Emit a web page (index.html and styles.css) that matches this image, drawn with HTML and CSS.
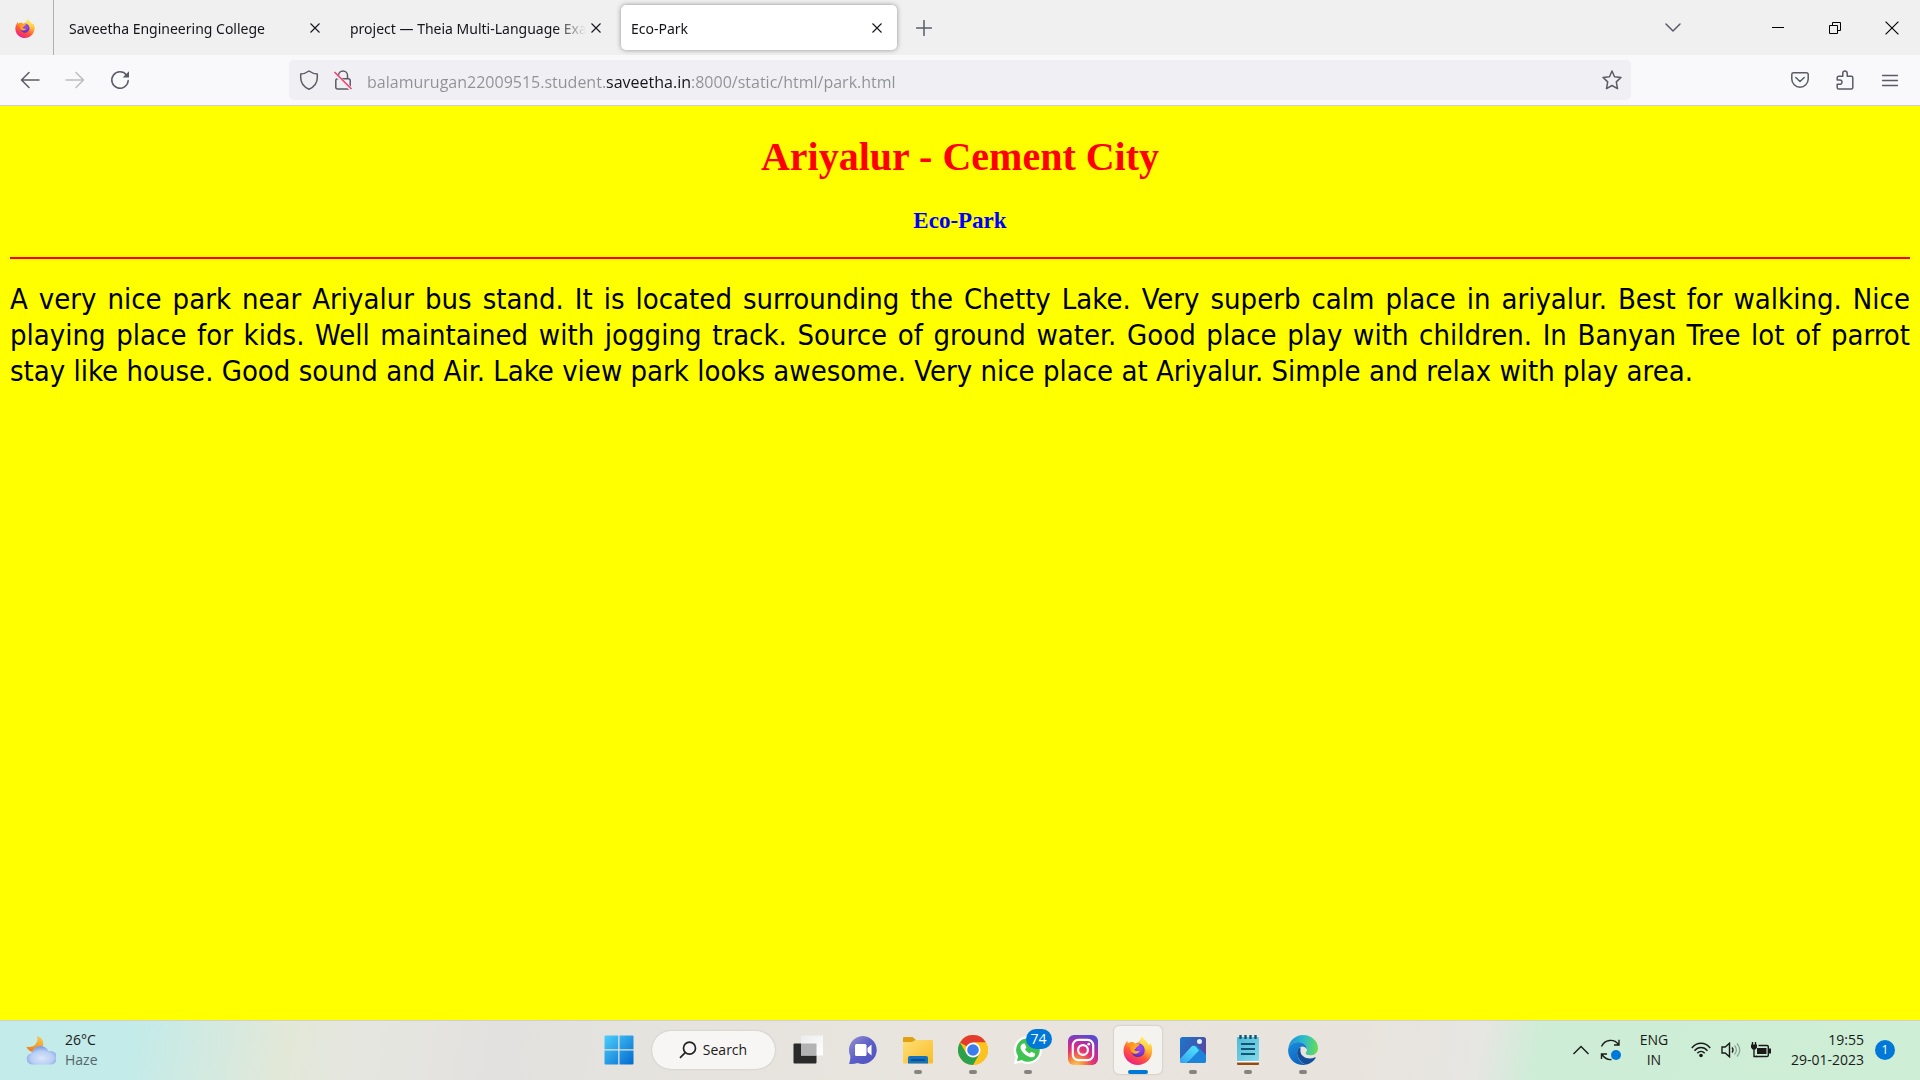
FILE: index.html
```html
<!DOCTYPE html>
<html lang="en">
<head>
<meta charset="utf-8">
<title>Eco-Park</title>
<link rel="stylesheet" href="styles.css">
</head>
<body>
<svg class="defs" aria-hidden="true">
  <defs>
    <linearGradient id="ff-body" x1="0.8" y1="0.05" x2="0.3" y2="1">
      <stop offset="0" stop-color="#fff44f"/><stop offset="0.35" stop-color="#ffb02e"/><stop offset="0.62" stop-color="#ff5a36"/><stop offset="1" stop-color="#f0188a"/>
    </linearGradient>
    <linearGradient id="ff-tail" x1="0.5" y1="0" x2="0.5" y2="1">
      <stop offset="0" stop-color="#fff36e"/><stop offset="0.5" stop-color="#ffc93a"/><stop offset="1" stop-color="#ff6a3a" stop-opacity="0"/>
    </linearGradient>
    <radialGradient id="ff-globe" cx="0.6" cy="0.35" r="0.7">
      <stop offset="0" stop-color="#a04df5"/><stop offset="0.6" stop-color="#7a35d8"/><stop offset="1" stop-color="#4b2fb0"/>
    </radialGradient>
    <linearGradient id="ff-head" x1="0" y1="0" x2="1" y2="0.6">
      <stop offset="0" stop-color="#ff8a16"/><stop offset="1" stop-color="#ffb52c"/>
    </linearGradient>
  </defs>
  <symbol id="firefox" viewBox="0 0 30 30">
    <path fill="url(#ff-body)" d="M19 1c1 3 3.600 4.300 5 6.500.8 1 1.200 2 1.500 3 1-.3 1.500-1.200 1.500-2.500 2 3.300 2.600 7 1.800 10.800C27.400 25.300 21.700 30 15 30 7 30 .5 23.700.5 16c0-3.800 1.500-7.500 4-10.500-.1 1.300.1 2.200.6 3C6.500 7.500 8 7 9.700 7c.8.9 1.800 1.500 3 1.700C14 7.500 17.500 7 19 1z"/>
    <path fill="url(#ff-tail)" d="M19 1c1 3 3.600 4.300 5 6.500.8 1 1.200 2 1.500 3 1-.3 1.500-1.200 1.500-2.500 2 3.300 2.600 7 1.800 10.800-1 4.700-4.300 7.200-7.300 7.200 2.500-4 3-8.500.5-12.500-1.500-2-4.500-3-6.500-4.500C17.500 8 19 5 19 1z"/>
    <path fill="url(#ff-globe)" d="M9 12c2-3.500 7.500-4.500 10.500-2 2.500 2.200 2.800 6.500 1 9.300-2 3-6.800 3.700-9.700 1.400C8.300 18.700 7.700 14.500 9 12z"/>
    <path fill="url(#ff-head)" d="M5 8.500C6.500 7.500 8 7 9.700 7c.8.9 1.800 1.500 3 1.700l4 .6c-.7 1.500-1.600 2.300-3 2.800-.3 1.300-1.500 2-2.500 2.700 1 1.500 3 1.800 5.500 1-1 2.600-3.500 3.500-6 2.600C8 17.500 6.800 14 7.500 11.500L5 8.500z"/>
  </symbol>
  <symbol id="cross" viewBox="0 0 12 12"><path d="M1.500 1.500l9 9M10.500 1.500l-9 9" fill="none" stroke="currentColor" stroke-width="1.100"/></symbol>
</svg>

<header class="browser">
  <div class="tabstrip">
    <button class="pinned" aria-label="Firefox View"><svg width="20" height="20"><use href="#firefox"/></svg></button>
    <div class="tabs">
      <div class="tab"><button class="tab-title">Saveetha Engineering College</button><button class="tab-close" aria-label="Close tab"><svg width="12" height="12"><use href="#cross"/></svg></button></div>
      <div class="tab"><button class="tab-title">project — Theia Multi-Language Example</button><button class="tab-close" aria-label="Close tab"><svg width="12" height="12"><use href="#cross"/></svg></button></div>
      <div class="tab tab-active"><button class="tab-title">Eco-Park</button><button class="tab-close" aria-label="Close tab"><svg width="12" height="12"><use href="#cross"/></svg></button></div>
    </div>
    <button class="tool new-tab" aria-label="New tab"><svg width="16" height="16" viewBox="0 0 16 16"><path d="M8 .5v15M.5 8h15" class="line"/></svg></button>
    <button class="tool list-tabs" aria-label="List all tabs"><svg width="16" height="10" viewBox="0 0 16 10"><path d="M1 1l7 7 7-7" class="line"/></svg></button>
    <div class="window-buttons">
      <button aria-label="Minimize"><svg width="12" height="12" viewBox="0 0 12 12"><path d="M0 5.500h12" class="win"/></svg></button>
      <button aria-label="Restore"><svg width="12" height="12" viewBox="0 0 12 12"><path d="M.5 3.500h8v8h-8zM3.500 3.500v-3h8v8h-3" class="win"/></svg></button>
      <button aria-label="Close"><svg width="14" height="14" viewBox="0 0 12 12"><path d="M.5.5l11 11M11.500.5l-11 11" class="win"/></svg></button>
    </div>
  </div>
  <div class="toolbar">
    <div class="tool-group">
      <button class="tool" aria-label="Back"><svg width="20" height="18" viewBox="0 0 20 18"><path d="M19 9H2M9 1.500L1.500 9 9 16.500" class="line"/></svg></button>
      <button class="tool" aria-label="Forward" disabled><svg width="20" height="18" viewBox="0 0 20 18"><path d="M1 9h17M11 1.500L18.500 9 11 16.500" class="line"/></svg></button>
      <button class="tool" aria-label="Reload"><svg width="20" height="20" viewBox="0 0 20 20"><path d="M16.500 5A8.200 8.200 0 1 0 18.200 10.500" class="line"/><path d="M19 1.200v6.300h-6.300z" fill="currentColor"/></svg></button>
    </div>
    <form class="urlbar">
      <svg width="20" height="20" viewBox="0 0 20 20"><path d="M10 1c2.500 1.800 5.200 2.800 8.300 3v3.500c0 5-2.800 9.300-8.300 11.700C4.500 16.800 1.700 12.500 1.700 7.500V4C4.800 3.800 7.500 2.800 10 1z" class="line"/></svg>
      <svg width="20" height="20" viewBox="0 0 20 20"><path d="M5.500 8.500V5.500a4.500 4.500 0 0 1 9 0v3M4.500 8.800h11a1.700 1.700 0 0 1 1.700 1.700v6.800a1.700 1.700 0 0 1-1.700 1.700h-11a1.700 1.700 0 0 1-1.700-1.700v-6.800a1.700 1.700 0 0 1 1.700-1.700z" class="line"/><path d="M1 3l17.500 16.500" stroke="#f0f0f4" stroke-width="3.500"/><path d="M1.500 2L18.500 19" stroke="#ff3b6b" stroke-width="1.600"/></svg>
      <input class="url" type="text" aria-label="Address" value="balamurugan22009515.student.saveetha.in:8000/static/html/park.html">
      <button class="star" type="button" aria-label="Bookmark this page"><svg width="20" height="20" viewBox="0 0 20 20"><path d="M10 1l2.500 5.700 6.500.7-4.700 4.500 1.200 6.800L10 15.500l-5.500 3.200 1.200-6.800L1 7.400l6.500-.7z" class="line"/></svg></button>
    </form>
    <div class="tool-group tool-group-end">
      <button class="tool" aria-label="Save to Pocket"><svg width="18" height="16" viewBox="0 0 18 16"><path d="M2.500.8h13a1.700 1.700 0 0 1 1.700 1.700V7a8.200 8.200 0 0 1-16.400 0V2.500A1.700 1.700 0 0 1 2.500.8zM4.800 5.500L9 9.500l4.200-4" class="line"/></svg></button>
      <button class="tool" aria-label="Extensions"><svg width="18" height="20" viewBox="0 0 18 20"><path d="M2.700 6.300H6.800V3.200a2.200 2.200 0 0 1 4.400 0v3.100h4.100a1.500 1.500 0 0 1 1.500 1.500v9.700a1.500 1.500 0 0 1-1.500 1.500H2.700a1.500 1.500 0 0 1-1.500-1.500v-3.200h2.600a2.200 2.200 0 0 0 0-4.400H1.200V7.800a1.500 1.500 0 0 1 1.500-1.500z" class="line"/></svg></button>
      <button class="tool" aria-label="Open application menu"><svg width="16" height="13" viewBox="0 0 16 13"><path d="M.5 1.500h15M.5 6.500h15M.5 11.500h15" class="line"/></svg></button>
    </div>
  </div>
</header>

<main class="page">
  <h1>Ariyalur - Cement City</h1>
  <h3>Eco-Park</h3>
  <hr>
  <p>A very nice park near Ariyalur bus stand. It is located surrounding the Chetty Lake. Very superb calm place in ariyalur. Best for walking. Nice playing place for kids. Well maintained with jogging track. Source of ground water. Good place play with children. In Banyan Tree lot of parrot stay like house. Good sound and Air. Lake view park looks awesome. Very nice place at Ariyalur. Simple and relax with play area.</p>
</main>

<footer class="taskbar">
  <button class="weather">
    <svg width="30" height="30" viewBox="0 0 30 30">
      <defs><linearGradient id="moon" x1="0.7" y1="0" x2="0.2" y2="1"><stop offset="0" stop-color="#f7c64b"/><stop offset="1" stop-color="#ee7a1a"/></linearGradient>
      <radialGradient id="cloud" cx="0.5" cy="0.65" r="0.6"><stop offset="0" stop-color="#dbe6f8"/><stop offset="0.6" stop-color="#b9cff4"/><stop offset="1" stop-color="#7f9fe6"/></radialGradient></defs>
      <path fill="url(#moon)" d="M11 1c5 1.500 7.500 6 5.800 10.500C15 16 9 18.500 5 16.500 2.500 15.300 1 13.700.3 11.800c4 .8 7.700-.3 9.600-3C11.500 6.500 12 3.500 11 1z"/>
      <path fill="url(#cloud)" d="M6 29.500a5.700 5.700 0 0 1-.5-11.300C7 13.800 10.500 11 14.500 11c3.800 0 6.600 2.200 8 5.200A6.800 6.800 0 1 1 23.500 29.500z"/>
    </svg>
    <span class="stack"><span>26°C</span><span class="muted">Haze</span></span>
  </button>
  <nav class="apps" aria-label="Apps">
    <button class="app" aria-label="Start"><svg width="30" height="30" viewBox="0 0 30 30"><defs><linearGradient id="win" gradientUnits="userSpaceOnUse" x1="0" y1="0" x2="30" y2="30"><stop offset="0" stop-color="#4fd0fb"/><stop offset="1" stop-color="#0068cf"/></linearGradient></defs><path fill="url(#win)" d="M1.500.5H14.200v13.700H.5V1.500a1 1 0 0 1 1-1zM15.500.5h13a1 1 0 0 1 1 1v12.700h-14zM.5 15.500h13.700v14H1.500a1 1 0 0 1-1-1zM15.500 15.500h14v13a1 1 0 0 1-1 1h-13z"/></svg></button>
    <button class="search"><svg width="18" height="18" viewBox="0 0 18 18"><circle cx="10.500" cy="7.200" r="6" fill="none" stroke="#222" stroke-width="1.700"/><path d="M6.200 11.600L1 16.800" stroke="#222" stroke-width="1.700"/></svg>Search</button>
    <button class="app" aria-label="Task view"><svg width="30" height="30" viewBox="0 0 30 30"><defs><linearGradient id="tv" x1="0" y1="0" x2="1" y2="1"><stop offset="0" stop-color="#ececec"/><stop offset="1" stop-color="#fff"/></linearGradient></defs><rect x=".5" y="8.500" width="23" height="20" rx="1" fill="#2b2b2b"/><path d="M8 .5h22v20H8z" fill="url(#tv)"/><path d="M8 8.500h15.500v12H8z" fill="#b3b3b3"/></svg></button>
    <button class="app" aria-label="Chat"><svg width="30" height="30" viewBox="0 0 30 30"><defs><linearGradient id="chat" x1="0" y1="0" x2="1" y2="1"><stop offset="0" stop-color="#9a93d0"/><stop offset="0.5" stop-color="#5b5fc7"/><stop offset="1" stop-color="#5050bd"/></linearGradient></defs><path fill="url(#chat)" d="M15 1a14 14 0 1 1-5.500 27c-3 1-5.500 1.300-8.500.8C2 26.500 2.300 24 2.300 21A14 14 0 0 1 15 1z"/><rect x="7" y="9" width="11.500" height="12" rx="1.500" fill="#fff"/><path d="M19.500 13l4-3.500v11l-4-3.500z" fill="#fff"/></svg></button>
    <button class="app running" aria-label="File Explorer"><svg width="30" height="30" viewBox="0 0 30 30"><defs><linearGradient id="folder" x1="0" y1="0" x2="1" y2="1"><stop offset="0" stop-color="#ffdf77"/><stop offset="1" stop-color="#f8bd26"/></linearGradient></defs><path d="M0 3a1 1 0 0 1 1-1h8.500L13 5H29v5H0z" fill="#e0a010"/><path d="M0 7h9l3.500-2H29a1 1 0 0 1 1 1v21.500a1 1 0 0 1-1 1H1a1 1 0 0 1-1-1z" fill="url(#folder)"/><path d="M5 28.500V23a2 2 0 0 1 2-2h16a2 2 0 0 1 2 2v5.500z" fill="#1272c0"/><path d="M8 25h14" stroke="#0a4484" stroke-width="1.500"/></svg></button>
    <button class="app running" aria-label="Chrome"><svg width="30" height="30" viewBox="0 0 30 30"><circle cx="15" cy="15" r="15" fill="#fcc31e"/><path d="M15 15L2 7.500A15 15 0 0 1 28 7.500H15z" fill="#e33b2e"/><path d="M15 15h13L15 7.500h13A15 15 0 0 1 15 30l6.500-11.300z" fill="#fcc31e"/><path d="M2 7.500A15 15 0 0 0 15 30l6.500-11.200L8.500 18.800z" fill="#2da04b"/><circle cx="15" cy="15" r="7.500" fill="#fff"/><circle cx="15" cy="15" r="5.800" fill="#3b7ded"/></svg></button>
    <button class="app running" aria-label="WhatsApp"><svg width="30" height="30" viewBox="0 0 30 30"><path d="M15 1a14 14 0 1 1-6.700 26.300L.8 29.300l2-7.300A14 14 0 0 1 15 1z" fill="#fff"/><path d="M15 3.200a11.800 11.800 0 1 1-6.300 21.800l-4.800 1.300 1.300-4.700A11.800 11.800 0 0 1 15 3.200z" fill="#3fc351"/><path d="M10.800 8.500c.6 0 1 0 1.300.7l1.200 2.800c.2.600-.6 1.500-1.200 2.200 1 2 2.500 3.300 4.700 4.300.8-.9 1.300-1.900 2-1.600l2.800 1.400c.7.400.5 1.700 0 2.600-1 1.400-3 1.800-4.800 1.200-4.300-1.400-7-3.800-8.800-7.500-1-2.300-.3-5.800 2.800-6.100z" fill="#fff"/></svg><span class="badge">74</span></button>
    <button class="app" aria-label="Instagram"><svg width="30" height="30" viewBox="0 0 30 30"><defs><radialGradient id="ig" cx="0.27" cy="1.05" r="1.100"><stop offset="0" stop-color="#fdd45a"/><stop offset="0.25" stop-color="#f98a3c"/><stop offset="0.5" stop-color="#e9356b"/><stop offset="0.75" stop-color="#b52ca6"/><stop offset="1" stop-color="#5a49d0"/></radialGradient></defs><rect width="30" height="30" rx="6" fill="url(#ig)"/><g fill="none" stroke="#fff" stroke-width="2.200"><rect x="4.800" y="4.800" width="20.400" height="20.400" rx="5.500"/><circle cx="15" cy="15" r="4.900"/></g><circle cx="20.800" cy="9.200" r="1.400" fill="#fff"/></svg></button>
    <button class="app running current" aria-label="Firefox"><svg width="30" height="30"><use href="#firefox"/></svg></button>
    <button class="app running" aria-label="Photos"><svg width="30" height="30" viewBox="0 0 30 30"><defs><linearGradient id="ph" x1="0" y1="0" x2="1" y2="0.6"><stop offset="0" stop-color="#1679cf"/><stop offset="1" stop-color="#5b459c"/></linearGradient><linearGradient id="mt" x1="0" y1="1" x2="0.6" y2="0"><stop offset="0" stop-color="#2f9df0"/><stop offset="1" stop-color="#4fdcfb"/></linearGradient><clipPath id="phc"><rect x="2" y="2" width="26" height="26" rx="2.500"/></clipPath></defs><g clip-path="url(#phc)"><path d="M2 2h26v26H2z" fill="url(#ph)"/><path d="M11 15.500L15.500 11a2.500 2.500 0 0 1 3.500 0l11 11v8H11z" fill="#1d84dc"/><path d="M2 24l11-12a3 3 0 0 1 5 0l3 3.500L7 30H2z" fill="url(#mt)"/></g><circle cx="21.500" cy="6.500" r="2.500" fill="#e5f2ff"/></svg></button>
    <button class="app running" aria-label="Notepad"><svg width="30" height="30" viewBox="0 0 30 30"><defs><linearGradient id="np" x1="0" y1="0" x2="1" y2="1"><stop offset="0" stop-color="#4fb9d4"/><stop offset="1" stop-color="#84daec"/></linearGradient></defs><path d="M4 24h22v5a1 1 0 0 1-1 1H5a1 1 0 0 1-1-1z" fill="#9a4a10"/><path d="M4 25h22v2.500H4z" fill="#fff"/><path d="M4 3a1 1 0 0 1 1-1h20a1 1 0 0 1 1 1v23H4z" fill="url(#np)"/><path d="M7.500 0v4M12.500 0v4M17.500 0v4M22.500 0v4" stroke="#0e5873" stroke-width="2.400"/><path d="M8 9h14M8 14h14M8 19h14" stroke="#0e5873" stroke-width="1.800"/></svg></button>
    <button class="app running" aria-label="Edge"><svg width="30" height="30" viewBox="0 0 30 30"><defs><linearGradient id="e1" x1="0" y1="0.400" x2="1" y2="0.500"><stop offset="0" stop-color="#1c8fd8"/><stop offset="0.5" stop-color="#2cbcc8"/><stop offset="1" stop-color="#67dc55"/></linearGradient><linearGradient id="e2" x1="0" y1="0" x2="0.6" y2="1"><stop offset="0" stop-color="#1a8fdf"/><stop offset="1" stop-color="#0b62bd"/></linearGradient></defs><path d="M.3 13C1.500 5.500 7.500 0 15 0c8.300 0 15 6 15 13 0 4.500-3.300 7.300-7.500 7.300-3 0-5-1-4.800-2.300.2-.8 1.300-1.300 1.300-3.500 0-4-4-7.500-9-7.500-4.500 0-8 2.500-9.700 6z" fill="url(#e1)"/><path d="M.1 15C.5 10 5 7 10 7c5 0 9 3.500 9 7.500 0 0-1.500-3-4.500-3-3.500 0-6 4-5 9 1 4.500 4.500 8.500 9 9.200C9 31.500 0 25 .1 15z" fill="url(#e2)"/><path d="M12.500 12c-3 1.500-4 5-3 8.500 1.300 4.700 5 8.500 9.300 9 4-1 7-3.500 8.700-6.300.5-.8-.3-1.200-1-.8-5.500 2.800-13.500 0-14-5.900-.1-1.800 0-3 0-4.500z" fill="#124f9a"/></svg></button>
  </nav>
  <div class="tray">
    <button aria-label="Show hidden icons"><svg width="16" height="10" viewBox="0 0 16 10"><path d="M.5 9L8 1.500 15.500 9" class="tline"/></svg></button>
    <button class="sync" aria-label="Updates"><svg width="22" height="22" viewBox="0 0 22 22"><path d="M1.500 7.500C4.500.5 14-.8 18.500 5.500M19 .8v5.200h-5M1.500 20v-5h5.500M2 15.500C5 20 8 21 11.500 20.500" class="tline"/><circle cx="16" cy="16" r="5" fill="#0078d7"/></svg></button>
    <button class="stack lang"><span>ENG</span><span>IN</span></button>
    <button class="status" aria-label="Network, volume and battery">
      <svg width="20" height="16" viewBox="0 0 20 16"><path d="M.8 6C6-.3 14-.3 19.200 6M3.500 8.700c3.700-4.300 9.300-4.300 13 0M6.300 11.300c2.200-2.600 5.200-2.600 7.400 0" class="tline"/><circle cx="10" cy="13.500" r="1.800" fill="#1a1a1a"/></svg>
      <svg width="20" height="16" viewBox="0 0 20 16"><path d="M1 5h3.200L8.500 1.200v13.600L4.200 11H1zM11 5.500c1.200 1.500 1.200 3.500 0 5" class="tline"/><path d="M13.500 3.500c2.300 2.700 2.300 6.300 0 9M16 1.500c3.500 4 3.500 9 0 13" fill="none" stroke="#8aa091" stroke-width="1.200"/></svg>
      <svg width="20" height="16" viewBox="0 0 20 16"><path d="M1.500 0v3M4.500 0v3M3 7v7.500h3" fill="none" stroke="#1a1a1a" stroke-width="1.400"/><path d="M0 2.500h6v3L4.500 7.500h-3L0 5.500zM6 6h9.500v6H6z" fill="#1a1a1a"/><path d="M7.500 3.500h8.500a1.300 1.300 0 0 1 1.300 1.300v8.400a1.300 1.300 0 0 1-1.300 1.300H5" class="tline"/><path d="M18 6.500h2v5h-2z" fill="#1a1a1a"/></svg>
    </button>
    <button class="stack clock"><span>19:55</span><span>29-01-2023</span></button>
    <button class="notice" aria-label="1 new notification">1</button>
  </div>
</footer>
</body>
</html>
```
FILE: styles.css
```css
* { box-sizing: border-box; }

body {
  margin: 0;
  min-height: 100vh;
  display: flex;
  flex-direction: column;
  background: #ffff00;
  font-family: "Open Sans", "Noto Sans", sans-serif;
  font-size: 14px;
}

button {
  padding: 0;
  border: 0;
  background: none;
  color: inherit;
  font: inherit;
}

svg { display: block; flex: none; }
.defs { position: absolute; width: 0; height: 0; }

.line { fill: none; stroke: currentColor; stroke-width: 1.5; stroke-linecap: round; stroke-linejoin: round; }
.win { fill: none; stroke: #000; stroke-width: 1; }
.tline { fill: none; stroke: #1a1a1a; stroke-width: 1.4; }

/* Browser chrome */
.tabstrip {
  display: flex;
  align-items: center;
  height: 55px;
  background: #f0f0f0;
}

.pinned {
  display: grid;
  place-items: center;
  width: 54px;
  height: 55px;
  padding-right: 4px;
  border-right: 1px solid #b0b0b4;
}

.tabs { display: flex; gap: 5px; padding-left: 5px; }

.tab {
  display: flex;
  align-items: center;
  width: 276px;
  height: 45px;
  padding: 0 10px;
  border-radius: 5px;
  color: #15141a;
}

.tab-active { background: #fff; box-shadow: 0 0 5px rgba(0, 0, 0, 0.4); }

.tab-title {
  flex: 1;
  min-width: 0;
  padding-top: 2px;
  overflow: hidden;
  white-space: nowrap;
  text-align: left;
  font-family: "Noto Sans", sans-serif;
  mask-image: linear-gradient(to left, transparent, #000 30px);
}

.tab-close { display: grid; place-items: center; width: 20px; height: 30px; }

.tool {
  display: grid;
  place-items: center;
  width: 40px;
  height: 40px;
  color: #5b5b66;
}
.tool:disabled { color: #bcbcc2; }
.new-tab { margin-left: 7px; }
.list-tabs { margin-left: auto; margin-right: 56px; }

.window-buttons { display: flex; }
.window-buttons button { display: grid; place-items: center; width: 57px; height: 55px; }

.toolbar {
  display: grid;
  grid-template-columns: auto 1fr 9fr 1fr auto;
  align-items: center;
  height: 51px;
  padding: 0 10px;
  background: #f9f9fb;
  border-bottom: 1px solid #ccccd2;
}

.tool-group { display: flex; gap: 5px; }
.tool-group-end { grid-column: 5; }

.urlbar {
  display: flex;
  align-items: center;
  grid-column: 3;
  height: 40px;
  padding: 0 9px 0 10px;
  gap: 14px;
  border-radius: 5px;
  background: #f0f0f4;
  color: #5b5b66;
}

/* The host name is darker than the rest of the address */
.url {
  flex: 1;
  min-width: 0;
  padding: 3px 0 0;
  border: 0;
  outline: 0;
  font: inherit;
  font-size: 16px;
  background: linear-gradient(to right, #8f8f96 239px, #15141a 239px 324px, #8f8f96 324px);
  background-clip: text;
  -webkit-text-fill-color: transparent;
}

/* Page shown in the browser */
.page { flex: 1; padding: 0 10px; }

.page h1 {
  margin: 28px 0;
  font: bold 40px/46px "Liberation Serif", serif;
  color: #ff0000;
  text-align: center;
}

.page h3 {
  margin: 0 0 23px;
  font: bold 23px/26px "Liberation Serif", serif;
  color: #0000ff;
  text-align: center;
}

.page hr { height: 2px; margin: 0; border: 0; background: #ff0000; }

.page p {
  margin: 22px 0 0;
  font: 29px/36px "DejaVu Sans Condensed", "Noto Sans", sans-serif;
  color: #000;
  text-align: justify;
}

/* Taskbar */
.taskbar {
  display: grid;
  grid-template-columns: 1fr auto 1fr;
  align-items: center;
  height: 60px;
  border-top: 1px solid #d2d2cc;
  background: linear-gradient(100deg, #c3ebe9 0, #c3ebe9 7%, #e2e8d8 15%, #e6e6e0 19%, #e2e1df 26%, #e5e3de 33%, #e9e4de 50%, #e9e3dd 70%, #e6e6e2 77%, #cdedd6 80%, #cfeed6 100%);
  color: #1a1a1a;
}

.stack { display: flex; flex-direction: column; line-height: 20px; }
.muted { color: #55666a; }

.weather { display: flex; align-items: center; gap: 9px; padding: 0 0 2px 26px; text-align: left; }

.apps { display: flex; align-items: center; gap: 7px; padding: 0 0 2px 1px; }

.app {
  position: relative;
  display: grid;
  place-items: center;
  width: 48px;
  height: 48px;
  border-radius: 5px;
}

.running::after {
  content: "";
  position: absolute;
  left: 20px;
  bottom: 0;
  width: 8px;
  height: 4px;
  border-radius: 2px;
  background: #868480;
}

.current { background: #f5f3f0; box-shadow: 0 0 2px rgba(0, 0, 0, 0.25); }
.current::after { left: 14px; width: 20px; background: #0078d7; }

.badge {
  position: absolute;
  top: 3px;
  left: 22px;
  width: 26px;
  height: 20px;
  border-radius: 10px;
  background: #0078d7;
  color: #fff;
  line-height: 20px;
  text-align: center;
}

.search {
  display: flex;
  align-items: center;
  justify-content: center;
  gap: 6px;
  width: 123px;
  height: 38px;
  margin: 0 2px;
  border-radius: 19px;
  background: #f7f6f4;
  box-shadow: 0 0 2px rgba(0, 0, 0, 0.2);
}

.tray { display: flex; align-items: center; justify-content: flex-end; padding: 0 25px 2px 0; }
.sync { margin-left: 11px; }
.lang { width: 40px; margin-left: 12px; align-items: center; }
.status { display: flex; gap: 10px; margin-left: 17px; }
.clock { margin-left: 20px; align-items: flex-end; }

.notice {
  width: 20px;
  height: 20px;
  margin-left: 11px;
  border-radius: 50%;
  background: #0078d7;
  color: #fff;
  font-size: 12px;
  line-height: 20px;
}
```
